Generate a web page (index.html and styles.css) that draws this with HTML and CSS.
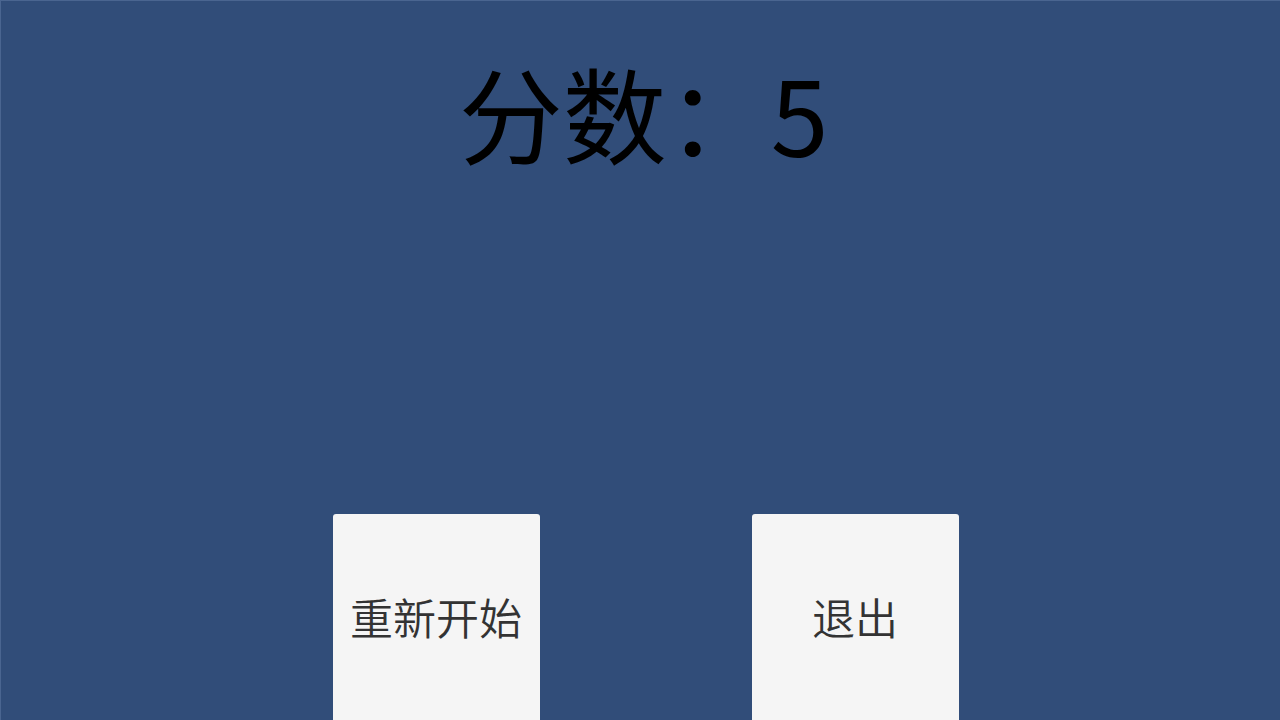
FILE: index.html
```html
<!DOCTYPE html>
<html lang="zh">
<head>
<meta charset="utf-8">
<link rel="stylesheet" href="styles.css">
</head>
<body>
<div class="screen">
  <div class="score">分数：5</div>
  <div class="actions">
    <div class="btn">重新开始</div>
    <div class="btn">退出</div>
  </div>
</div>
</body>
</html>
```

FILE: styles.css
```css
html, body {
  margin: 0;
  padding: 0;
  width: 1280px;
  height: 720px;
  overflow: hidden;
}
.screen {
  box-sizing: border-box;
  width: 1280px;
  height: 720px;
  background: #314d79;
  border-top: 1px solid #4a6590;
  border-left: 1px solid #4a6590;
  display: flex;
  flex-direction: column;
  align-items: center;
  font-family: "Noto Sans CJK SC", "Noto Sans", sans-serif;
  overflow: hidden;
}
.score {
  margin-top: 46px;
  margin-left: 6px;
  font-size: 104px;
  line-height: 130px;
  color: #000;
  white-space: nowrap;
}
.actions {
  margin-top: auto;
  margin-bottom: -20px;
  margin-left: 10px;
  display: flex;
  gap: 212px;
}
.btn {
  width: 207px;
  height: 226px;
  background: #f5f5f5;
  border-radius: 3px;
  display: flex;
  align-items: center;
  justify-content: center;
  padding-bottom: 22px;
  box-sizing: border-box;
  font-size: 43px;
  font-weight: 350;
  color: #333;
}
```
